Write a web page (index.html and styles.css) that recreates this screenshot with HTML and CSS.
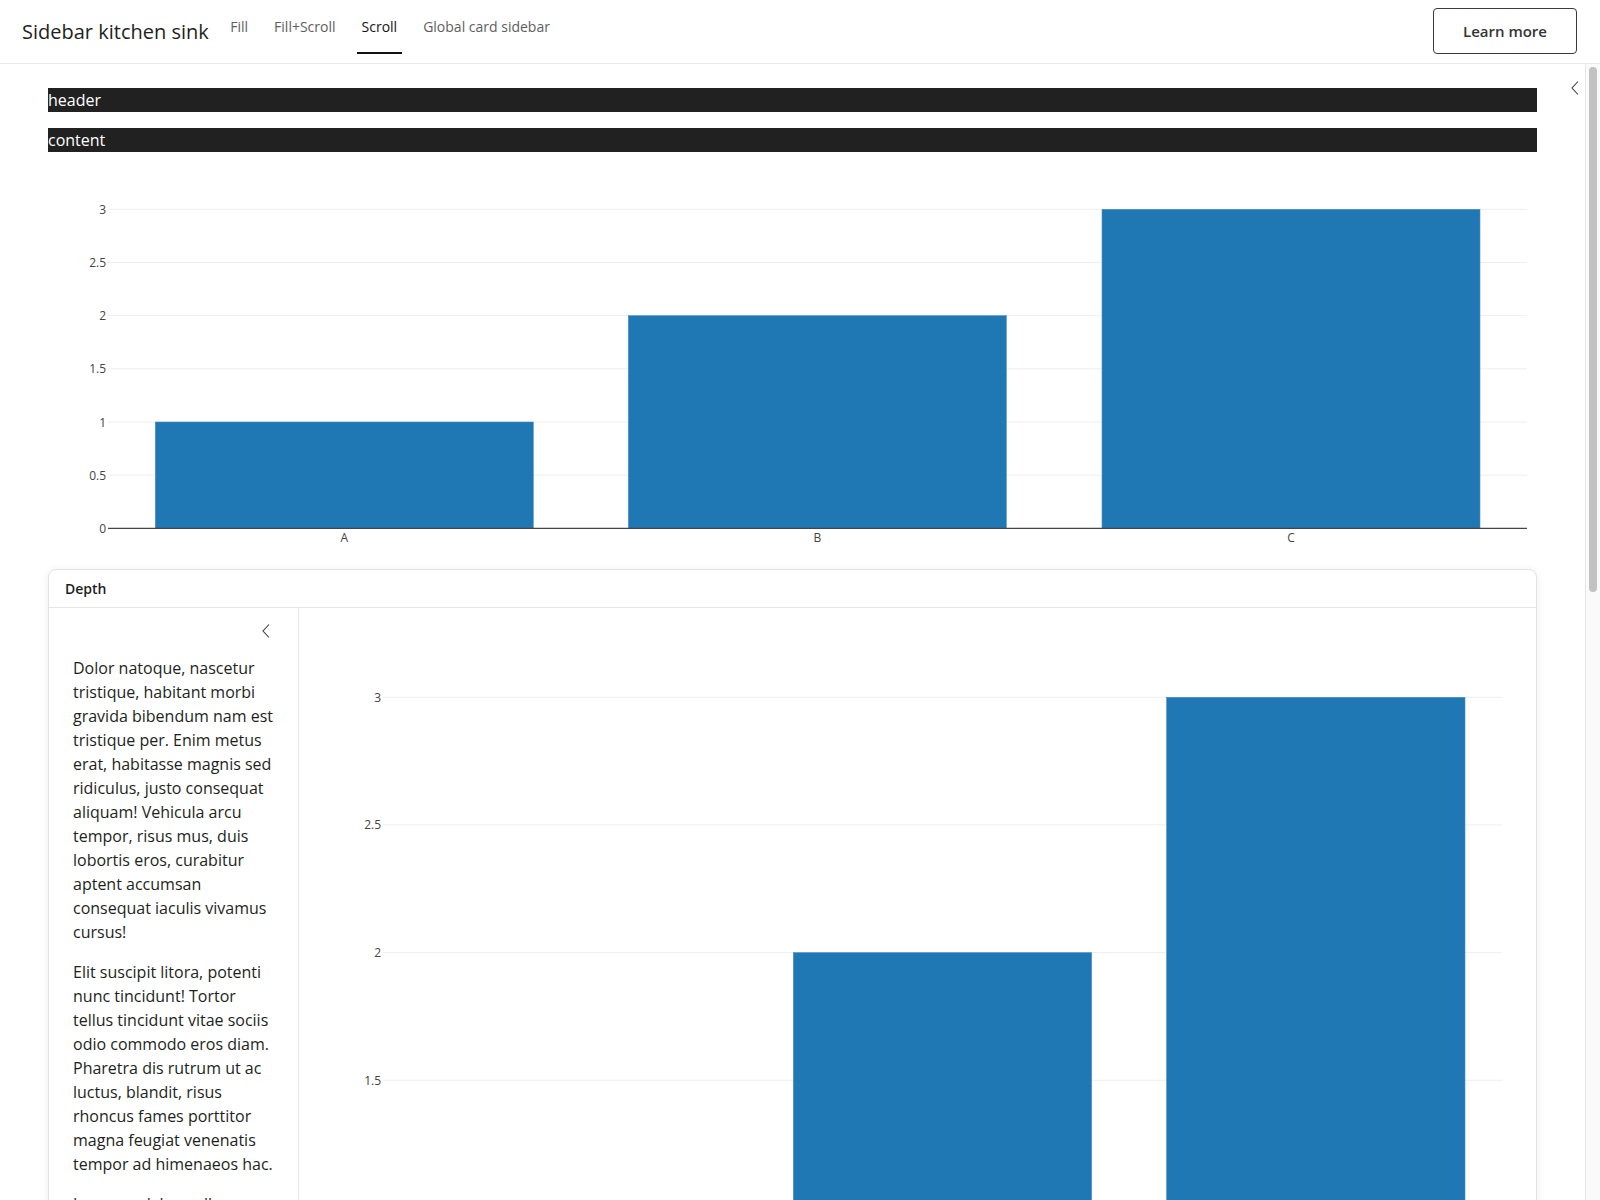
FILE: index.html
```html
<!DOCTYPE html>
<html lang="en">
<head>
<meta charset="utf-8">
<title>Sidebar kitchen sink</title>
<link rel="stylesheet" href="styles.css">
</head>
<body>
<header class="navbar">
  <div class="brand">Sidebar kitchen sink</div>
  <nav class="tabs">
    <a class="tab">Fill</a>
    <a class="tab">Fill+Scroll</a>
    <a class="tab active">Scroll</a>
    <a class="tab">Global card sidebar</a>
  </nav>
  <div class="spacer"></div>
  <button class="btn-outline">Learn more</button>
</header>

<div class="viewport">
<div class="page">
  <div class="layout">
    <main class="main">
      <div class="bar">header</div>
      <div class="bar">content</div>

      <svg class="chart-top" viewBox="0 0 1489 385" width="1489" height="385">
        <g class="grid">
          <line x1="60" x2="1479" y1="41.3" y2="41.3"/>
          <line x1="60" x2="1479" y1="94.5" y2="94.5"/>
          <line x1="60" x2="1479" y1="147.7" y2="147.7"/>
          <line x1="60" x2="1479" y1="200.8" y2="200.8"/>
          <line x1="60" x2="1479" y1="254" y2="254"/>
          <line x1="60" x2="1479" y1="307.2" y2="307.2"/>
        </g>
        <g class="bars">
          <rect x="107.3" y="254" width="378" height="106.3"/>
          <rect x="580.3" y="147.7" width="378" height="212.6"/>
          <rect x="1054" y="41.3" width="378" height="319"/>
        </g>
        <line class="axis" x1="60" x2="1479" y1="360.3" y2="360.3"/>
        <g class="ticks yt">
          <text x="58" y="41.3">3</text>
          <text x="58" y="94.5">2.5</text>
          <text x="58" y="147.7">2</text>
          <text x="58" y="200.8">1.5</text>
          <text x="58" y="254">1</text>
          <text x="58" y="307.2">0.5</text>
          <text x="58" y="360.3">0</text>
        </g>
        <g class="ticks xt">
          <text x="296.3" y="369">A</text>
          <text x="769.3" y="369">B</text>
          <text x="1243" y="369">C</text>
        </g>
      </svg>

      <section class="card">
        <div class="card-header">Depth</div>
        <div class="card-body">
          <aside class="card-sidebar">
            <div class="toggle-row">
              <svg class="chev" viewBox="0 0 8 14" width="8" height="14"><polyline points="7,0.5 1,7 7,13.5"/></svg>
            </div>
            <p>Dolor natoque, nascetur tristique, habitant morbi gravida bibendum nam est tristique per. Enim metus erat, habitasse magnis sed ridiculus, justo consequat aliquam! Vehicula arcu tempor, risus mus, duis lobortis eros, curabitur aptent accumsan consequat iaculis vivamus cursus!</p>
            <p>Elit suscipit litora, potenti nunc tincidunt! Tortor tellus tincidunt vitae sociis odio commodo eros diam. Pharetra dis rutrum ut ac luctus, blandit, risus rhoncus fames porttitor magna feugiat venenatis tempor ad himenaeos hac.</p>
            <p>Ipsum sodales nulla volutpat, lacinia class nisl, sagittis fusce suscipit eros. Ornare quis turpis, massa pulvinar varius orci leo hendrerit aenean; morbi lacus magna integer faucibus.</p>
            <p>Amet facilisis curae, mauris ligula sem, porta montes lorem. Netus dictum velit conubia feugiat proin rhoncus, tempus primis ultricies parturient. Semper fringilla cras dapibus nullam.</p>
            <p>Consectetur vel quisque, euismod etiam nec. Egestas placerat donec, interdum ante finibus elementum, sollicitudin pretium nostra. Hac eleifend nibh ultrices platea laoreet.</p>
            <p>Sit adipiscing mollis, convallis molestie tempus! Auctor condimentum taciti, viverra dui urna lectus. Phasellus habitant sapien, at quam vulputate neque ligula curabitur.</p>
            <p>Nisi maecenas penatibus, senectus tellus arcu, commodo erat. Duis risus scelerisque at lacus, vestibulum facilisi aliquet.</p>
          </aside>
          <div class="card-main">
            <svg class="chart-inner" viewBox="0 0 1237 900" width="1237" height="900">
              <g class="grid">
                <line x1="84" x2="1203" y1="89.3" y2="89.3"/>
                <line x1="84" x2="1203" y1="216.95" y2="216.95"/>
                <line x1="84" x2="1203" y1="344.6" y2="344.6"/>
                <line x1="84" x2="1203" y1="472.25" y2="472.25"/>
                <line x1="84" x2="1203" y1="599.9" y2="599.9"/>
                <line x1="84" x2="1203" y1="727.55" y2="727.55"/>
              </g>
              <g class="bars">
                <rect x="124.5" y="599.9" width="298.4" height="255.3"/>
                <rect x="494.3" y="344.6" width="298.4" height="510.6"/>
                <rect x="867.6" y="89.3" width="298.4" height="765.9"/>
              </g>
              <line class="axis" x1="84" x2="1203" y1="855.2" y2="855.2"/>
              <g class="ticks yt">
                <text x="82" y="89.3">3</text>
                <text x="82" y="216.95">2.5</text>
                <text x="82" y="344.6">2</text>
                <text x="82" y="472.25">1.5</text>
                <text x="82" y="599.9">1</text>
                <text x="82" y="727.55">0.5</text>
                <text x="82" y="855.2">0</text>
              </g>
              <g class="ticks xt">
                <text x="273.7" y="866">A</text>
                <text x="643.5" y="866">B</text>
                <text x="1016.8" y="866">C</text>
              </g>
            </svg>
          </div>
        </div>
      </section>
    </main>
    <aside class="side-collapsed">
      <svg class="chev" viewBox="0 0 8 14" width="8" height="14"><polyline points="7,0.5 1,7 7,13.5"/></svg>
    </aside>
  </div>
</div>
<div class="scrollbar"><div class="thumb"></div></div>
</div>
</body>
</html>
```

FILE: styles.css
```css
* { box-sizing: border-box; }

html, body {
  margin: 0;
  height: 100%;
  overflow: hidden;
}

body {
  font-family: "Open Sans", "Noto Sans", "Liberation Sans", sans-serif;
  color: #1d1f21;
  background: #fff;
}

.navbar {
  height: 64px;
  display: flex;
  align-items: center;
  padding: 0 23px 0 22px;
  border-bottom: 1px solid #e8e8e8;
}

.brand {
  font-size: 20px;
  line-height: 28px;
  color: #1d1f21;
  white-space: nowrap;
  padding-top: 1px;
}

.tabs {
  display: flex;
  align-self: flex-start;
  gap: 17px;
  margin-left: 17px;
}

.tab {
  display: block;
  height: 54px;
  padding: 16px 4.5px 0;
  font-size: 14px;
  line-height: 21px;
  color: #5e5e5e;
  border-bottom: 2px solid transparent;
  white-space: nowrap;
}

.tab.active {
  color: #111;
  border-bottom-color: #111;
}

.spacer { flex: 1; }

.btn-outline {
  width: 144px;
  height: 46px;
  margin-top: -1px;
  border: 1px solid #3a3a3a;
  border-radius: 4px;
  background: #fff;
  font-family: inherit;
  font-size: 15px;
  font-weight: 600;
  color: #343434;
}

.viewport {
  display: flex;
  height: calc(100% - 64px);
}

.page {
  flex: 1;
  min-width: 0;
  overflow: hidden;
}

.scrollbar {
  width: 15px;
  flex: none;
  background: #fafafa;
  border-left: 1px solid #e6e6e6;
  padding: 3px 3px 0 3px;
}

.thumb {
  height: 525px;
  background: #c2c2c2;
  border-radius: 4px;
}

.layout {
  display: grid;
  grid-template-columns: 1fr 48px;
}

.main {
  padding: 24px 0 24px 48px;
  min-width: 0;
}

.bar {
  background: #212121;
  color: #fff;
  font-size: 16px;
  line-height: 24px;
  height: 24px;
  margin-bottom: 16px;
}

.chart-top {
  display: block;
  margin-bottom: 16px;
}

.grid line { stroke: #eeeeee; stroke-width: 1; }
.axis { stroke: #444; stroke-width: 1.2; }
.bars rect { fill: #1f77b4; stroke: #4a90c4; stroke-width: 0.6; }

.ticks text {
  font-family: "Open Sans", "Noto Sans", sans-serif;
  font-size: 12px;
  fill: #444;
}
.yt text { text-anchor: end; dominant-baseline: central; }
.xt text { text-anchor: middle; dominant-baseline: central; }

.card {
  border: 1px solid #e3e3e3;
  border-radius: 8px;
  box-shadow: 0 1px 8px rgba(0, 0, 0, 0.07);
  background: #fff;
  overflow: hidden;
}

.card-header {
  padding: 8px 16px;
  font-size: 14px;
  line-height: 21px;
  font-weight: 600;
  color: #1d1f21;
  border-bottom: 1px solid #e6e6e6;
}

.card-body {
  display: grid;
  grid-template-columns: 250px 1fr;
}

.card-sidebar {
  border-right: 1px solid #e6e6e6;
  padding: 16px 24px 24px;
}

.toggle-row {
  display: flex;
  justify-content: flex-end;
  padding-right: 4px;
  height: 32px;
}

.card-sidebar p {
  margin: 0 0 16px;
  font-size: 16px;
  line-height: 24px;
  color: #1d1f21;
}

.card-main { min-width: 0; }

.chart-inner { display: block; }

.chev { display: block; }
.chev polyline {
  fill: none;
  stroke: #3a3a3a;
  stroke-width: 1.1;
  stroke-linejoin: miter;
}

.side-collapsed {
  display: flex;
  justify-content: flex-end;
  padding: 17px 6px 0 0;
}
```
